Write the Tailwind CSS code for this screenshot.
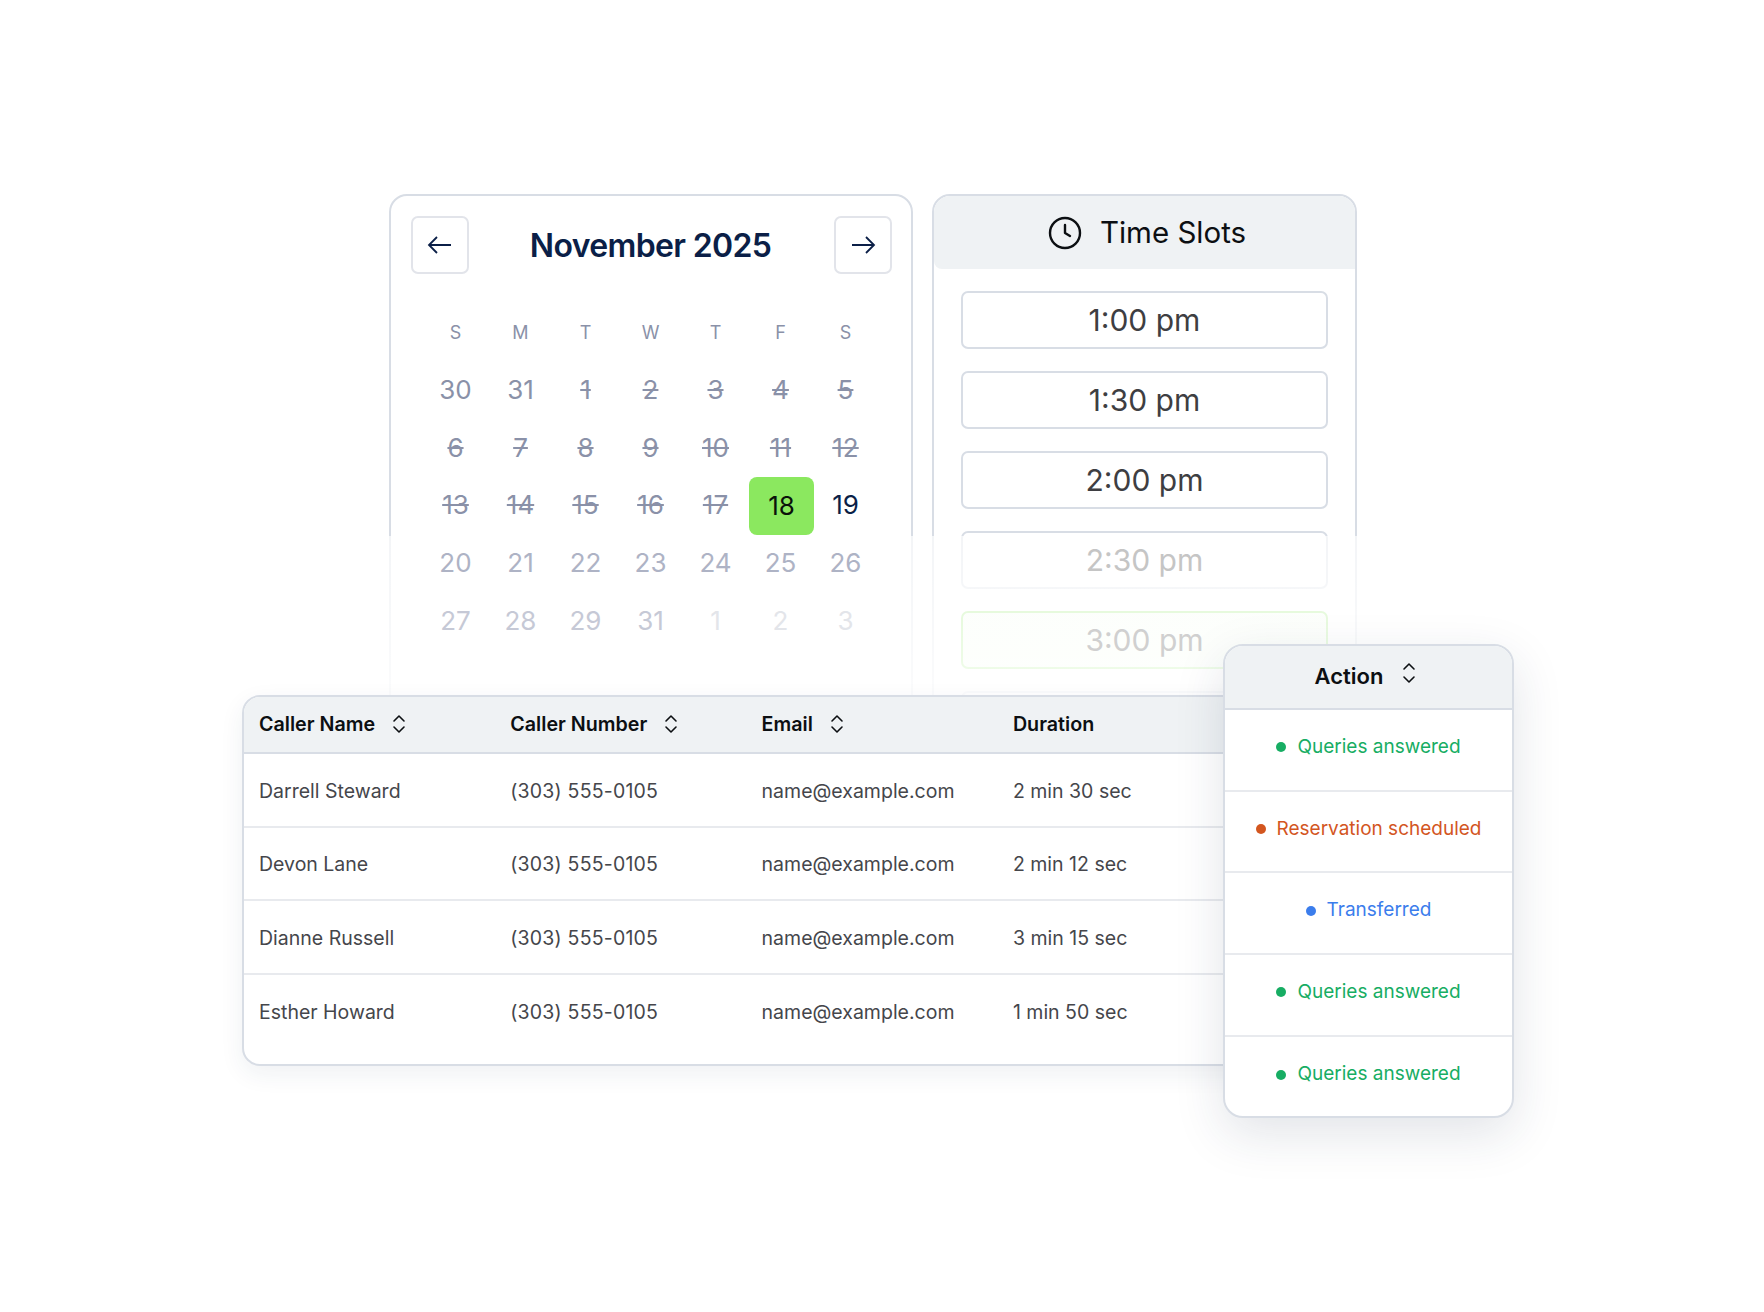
<!DOCTYPE html>
<html>
	<head>
		<title>Booking overview</title>
		<script src="https://cdn.jsdelivr.net/npm/@tailwindcss/browser@4"></script>
	</head>
	<body class="bg-white font-['Inter',sans-serif]">
		<div class="relative w-[1764px] h-[1312px] overflow-hidden">
			<!-- Top row: calendar and time slots -->
			<div class="flex gap-[19px] pl-[389px] pt-[194px]">
				<!-- Calendar -->
				<div class="w-[524px] h-[520px] border-2 border-[#d8dde5] rounded-[18px] pl-[20px] pr-[19px] pt-[20px] bg-white">
					<div class="flex items-center justify-between">
						<button class="w-[58px] h-[58px] border-2 border-[#e2e4ea] rounded-[7px] flex items-center justify-center">
							<svg width="26" height="20" viewBox="0 0 26 20" fill="none" stroke="#0b1f47" stroke-width="1.8"><path d="M24 10H2M10 2l-8 8 8 8" /></svg>
						</button>
						<h1 class="text-[32px] font-semibold tracking-[-0.65px] text-[#0b1f47] pt-[1px] pr-[2px]">November 2025</h1>
						<button class="w-[58px] h-[58px] border-2 border-[#e2e4ea] rounded-[7px] flex items-center justify-center">
							<svg width="26" height="20" viewBox="0 0 26 20" fill="none" stroke="#0b1f47" stroke-width="1.8"><path d="M2 10h22M16 2l8 8-8 8" /></svg>
						</button>
					</div>

					<div class="relative z-20 mt-[29px] ml-[12px] w-[455px] grid grid-cols-7 auto-rows-[57.7px] text-center items-center text-[26px] text-[#8a91a8]">
						<div class="text-[18px] pt-[2px]">S</div><div class="text-[18px] pt-[2px]">M</div><div class="text-[18px] pt-[2px]">T</div><div class="text-[18px] pt-[2px]">W</div><div class="text-[18px] pt-[2px]">T</div><div class="text-[18px] pt-[2px]">F</div><div class="text-[18px] pt-[2px]">S</div>

						<div>30</div><div>31</div><div class="line-through">1</div><div class="line-through">2</div><div class="line-through">3</div><div class="line-through">4</div><div class="line-through">5</div>
						<div class="line-through">6</div><div class="line-through">7</div><div class="line-through">8</div><div class="line-through">9</div><div class="line-through">10</div><div class="line-through">11</div><div class="line-through">12</div>
						<div class="line-through">13</div><div class="line-through">14</div><div class="line-through">15</div><div class="line-through">16</div><div class="line-through">17</div>
						<div class="relative left-[1px] top-[1px] h-[58px] flex items-center justify-center rounded-[8px] bg-[#8be85f] text-[#0a120a]">18</div>
						<div class="text-[#0b1f47]">19</div>

						<div class="text-[#aeb3c5]">20</div><div class="text-[#aeb3c5]">21</div><div class="text-[#aeb3c5]">22</div><div class="text-[#aeb3c5]">23</div><div class="text-[#aeb3c5]">24</div><div class="text-[#aeb3c5]">25</div><div class="text-[#aeb3c5]">26</div>
						<div class="text-[#c6c9d6]">27</div><div class="text-[#c6c9d6]">28</div><div class="text-[#c6c9d6]">29</div><div class="text-[#c6c9d6]">31</div><div class="text-[#e3e5ea]">1</div><div class="text-[#e3e5ea]">2</div><div class="text-[#e3e5ea]">3</div>
					</div>
				</div>

				<!-- Time slots -->
				<div class="w-[425px] h-[520px] border-2 border-[#d8dde5] rounded-[18px] bg-white">
					<div class="h-[73px] bg-[#eff2f4] rounded-t-[16px] rounded-bl-[8px] flex items-center justify-center gap-[18px] pl-[5px] text-[29.5px] text-[#0c0f12]">
						<svg width="34" height="34" viewBox="0 0 34 34" fill="none" stroke="#0c0f12" stroke-width="2.4" stroke-linecap="round" stroke-linejoin="round"><circle cx="17" cy="17" r="15" /><path d="M17 9v8l5 3" /></svg>
						<span>Time Slots</span>
					</div>
					<div class="flex flex-col gap-[22px] pl-[27px] pr-[27px] pt-[22px] text-[30px] text-[#3e3e42]">
						<div class="h-[58px] border-2 border-[#d8dde5] rounded-[7px] flex items-center justify-center">1:00 pm</div>
						<div class="h-[58px] border-2 border-[#d8dde5] rounded-[7px] flex items-center justify-center">1:30 pm</div>
						<div class="h-[58px] border-2 border-[#d8dde5] rounded-[7px] flex items-center justify-center">2:00 pm</div>
						<div class="h-[58px] border-2 border-[#d8dde5] rounded-[7px] flex items-center justify-center"><span class="relative z-20 text-[#c5c5c5]">2:30 pm</span></div>
						<div class="h-[58px] border-2 border-[#8be85f] bg-[#8be85f]/10 rounded-[7px] flex items-center justify-center"><span class="relative z-20 text-[#d0d0d0]">3:00 pm</span></div>
						<div class="h-[58px] border-2 border-[#d8dde5] rounded-[7px]"></div>
					</div>
				</div>
			</div>

			<!-- White fade over the lower part of both cards -->
			<div class="absolute z-10 left-[380px] top-[536px] w-[990px] h-[170px] bg-gradient-to-b from-white/70 to-white/90"></div>

			<!-- Calls table, lies over the cards -->
			<div class="absolute z-30 left-[242px] top-[695px] w-[1060px] h-[371px] bg-white border-2 border-[#d8dde5] rounded-[18px] shadow-[0_8px_24px_rgba(30,50,80,0.07)] overflow-hidden">
				<div class="h-[57px] bg-[#eff2f4] border-b-2 border-[#d8dde5] grid grid-cols-[251.3px_251.3px_251.3px_1fr] pl-[15px] items-center text-[19.7px] font-semibold text-[#0c0f12]">
					<div class="flex items-center gap-[17px]">Caller Name
						<svg width="14" height="20" viewBox="0 0 14 20" fill="none" stroke="#0c0f12" stroke-width="1.6" stroke-linecap="round" stroke-linejoin="round"><path d="M2 7l5-5 5 5M2 13l5 5 5-5" /></svg>
					</div>
					<div class="flex items-center gap-[17px]">Caller Number
						<svg width="14" height="20" viewBox="0 0 14 20" fill="none" stroke="#0c0f12" stroke-width="1.6" stroke-linecap="round" stroke-linejoin="round"><path d="M2 7l5-5 5 5M2 13l5 5 5-5" /></svg>
					</div>
					<div class="flex items-center gap-[17px]">Email
						<svg width="14" height="20" viewBox="0 0 14 20" fill="none" stroke="#0c0f12" stroke-width="1.6" stroke-linecap="round" stroke-linejoin="round"><path d="M2 7l5-5 5 5M2 13l5 5 5-5" /></svg>
					</div>
					<div>Duration</div>
				</div>
				<div class="text-[19.5px] text-[#45464b]">
					<div class="h-[73.6px] border-b-2 border-[#e8eaee] grid grid-cols-[251.3px_251.3px_251.3px_1fr] pl-[15px] pt-[3px] items-center">
						<div>Darrell Steward</div><div class="tracking-[0.2px]">(303) 555-0105</div><div>name@example.com</div><div>2 min 30 sec</div>
					</div>
					<div class="h-[73.6px] border-b-2 border-[#e8eaee] grid grid-cols-[251.3px_251.3px_251.3px_1fr] pl-[15px] pt-[3px] items-center">
						<div>Devon Lane</div><div class="tracking-[0.2px]">(303) 555-0105</div><div>name@example.com</div><div>2 min 12 sec</div>
					</div>
					<div class="h-[73.6px] border-b-2 border-[#e8eaee] grid grid-cols-[251.3px_251.3px_251.3px_1fr] pl-[15px] pt-[3px] items-center">
						<div>Dianne Russell</div><div class="tracking-[0.2px]">(303) 555-0105</div><div>name@example.com</div><div>3 min 15 sec</div>
					</div>
					<div class="h-[73.6px] grid grid-cols-[251.3px_251.3px_251.3px_1fr] pl-[15px] pt-[2px] items-center">
						<div>Esther Howard</div><div class="tracking-[0.2px]">(303) 555-0105</div><div>name@example.com</div><div>1 min 50 sec</div>
					</div>
				</div>
			</div>

			<!-- Action column, lies over the table -->
			<div class="absolute z-40 left-[1223px] top-[644px] w-[291px] h-[474px] bg-white border-2 border-[#d8dde5] rounded-[20px] shadow-[0_16px_50px_rgba(30,50,80,0.13)] overflow-hidden">
				<div class="h-[64px] bg-[#eff2f4] border-b-2 border-[#d8dde5] flex items-center justify-center gap-[19px] pr-[6px] pb-[2px] text-[22px] font-semibold text-[#0c0f12]">
					<span>Action</span>
					<svg class="-mt-[7px]" width="14" height="22" viewBox="0 0 14 22" fill="none" stroke="#0c0f12" stroke-width="1.6" stroke-linecap="round" stroke-linejoin="round"><path d="M2 7l5-5 5 5M2 15l5 5 5-5" /></svg>
				</div>
				<div class="text-[19px]">
					<div class="h-[81.7px] border-b-2 border-[#e8eaee] flex items-center justify-center gap-[11px] pb-[5px] text-[#17ad63]">
						<span class="w-[10px] h-[10px] rounded-full bg-[#17ad63]"></span>Queries answered
					</div>
					<div class="h-[81.7px] border-b-2 border-[#e8eaee] flex items-center justify-center gap-[11px] pb-[5px] text-[#d3561f]">
						<span class="w-[10px] h-[10px] rounded-full bg-[#d3561f]"></span>Reservation scheduled
					</div>
					<div class="h-[81.7px] border-b-2 border-[#e8eaee] flex items-center justify-center gap-[11px] pb-[5px] text-[#3b7dec]">
						<span class="w-[10px] h-[10px] rounded-full bg-[#3b7dec]"></span>Transferred
					</div>
					<div class="h-[81.7px] border-b-2 border-[#e8eaee] flex items-center justify-center gap-[11px] pb-[5px] text-[#17ad63]">
						<span class="w-[10px] h-[10px] rounded-full bg-[#17ad63]"></span>Queries answered
					</div>
					<div class="h-[81.7px] flex items-center justify-center gap-[11px] pb-[6px] text-[#17ad63]">
						<span class="w-[10px] h-[10px] rounded-full bg-[#17ad63]"></span>Queries answered
					</div>
				</div>
			</div>
		</div>
	</body>
</html>
